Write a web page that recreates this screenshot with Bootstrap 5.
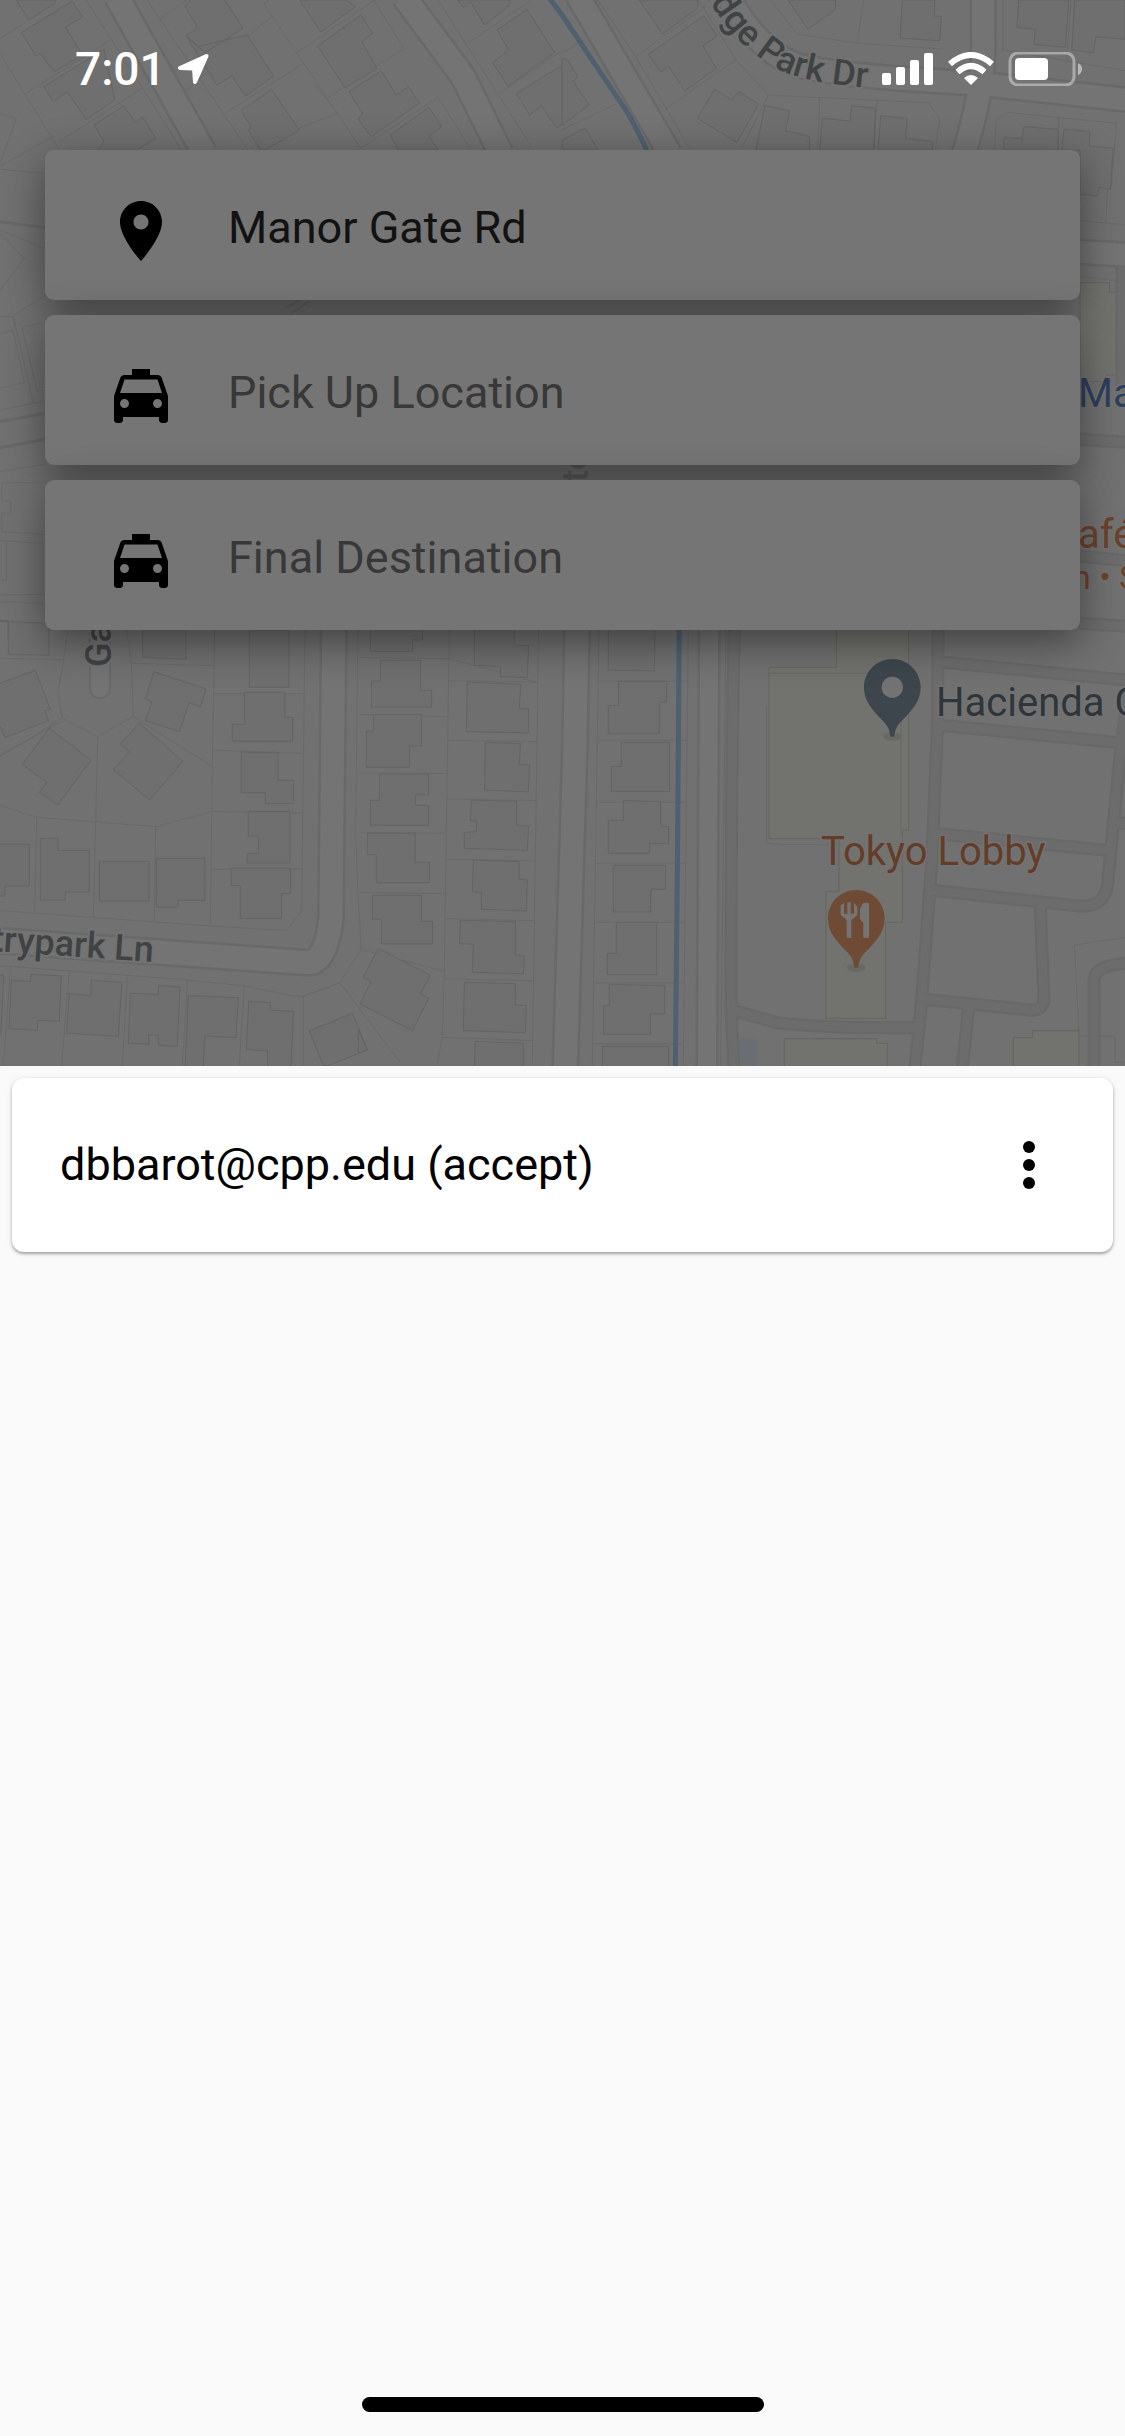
<!DOCTYPE html>
<html lang="en">
<head>
<meta charset="utf-8">
<meta name="viewport" content="width=device-width, initial-scale=1">
<title>Ride request</title>
<link href="https://cdn.jsdelivr.net/npm/bootstrap@5.3.0/dist/css/bootstrap.min.css" rel="stylesheet">
<style>
  body { background: #fafafa; color: #000; font-family: Roboto, "Liberation Sans", sans-serif; font-size: 45px; line-height: 54px; }

  /* Dimmed map area */
  .map-area { background: #717171; padding-bottom: 436px; }
  .map-canvas path, .map-canvas rect { vector-effect: non-scaling-stroke; }
  .map-canvas { font-size: 40px; }
  .parcel { fill: none; stroke: #696969; stroke-width: 1; }
  .house { fill: #6f6f6f; stroke: #646464; stroke-width: 1; }
  .shop { fill: #72726e; stroke: #666561; stroke-width: 1; }
  .street-edge { fill: none; stroke: #696969; stroke-width: 28; }
  .street { fill: none; stroke: #747474; stroke-width: 23; }
  .lane-edge { fill: none; stroke: #686868; stroke-width: 13; }
  .lane { fill: none; stroke: #6c6c6c; stroke-width: 9; }
  .creek { fill: none; stroke: #4f6070; stroke-width: 5; }
  .street-name { font-size: 36px; font-weight: 500; fill: #404344; stroke: #737373; stroke-width: 4px; paint-order: stroke; }
  .street-name.faded { fill: #5f5f5f; }
  .place-name { stroke: #737373; stroke-width: 3px; paint-order: stroke; }

  .status-bar { height: 150px; padding: 40px 43px 0 75px; color: #fff; }
  .clock { font-size: 46px; font-weight: 500; line-height: 58px; }
  .status-left { gap: 12px; }
  .status-icons { margin-top: 12px; }

  .field-list { gap: 15px; padding: 0 45px; }
  .field-card { height: 150px; padding: 6px 48px 0 60px; gap: 51px; background: #757575; border-radius: 9px; box-shadow: 0 12px 42px rgba(0, 0, 0, .44); }
  .field-card svg { margin-top: 6px; }
  .field-input { color: #121212; font-size: 45px; line-height: 54px; }
  .field-input::placeholder { color: #383838; opacity: 1; }

  .rider-sheet { padding: 12px; }
  .rider-card { height: 174px; padding: 0 48px; border-radius: 12px; box-shadow: 0 2px 3px rgba(0, 0, 0, .3), 0 1px 6px rgba(0, 0, 0, .1); }
  .home-bar { width: 402px; height: 15px; border-radius: 8px; margin-bottom: 24px; }
</style>
<script src="https://cdn.jsdelivr.net/npm/bootstrap@5.3.0/dist/js/bootstrap.bundle.min.js"></script>
</head>
<body class="d-flex flex-column min-vh-100">

<header class="map-area position-relative overflow-hidden">
  <svg class="map-canvas position-absolute top-0 start-0 w-100 h-100" viewBox="0 0 1125 1066" preserveAspectRatio="xMidYMid slice" aria-hidden="true">

    <!-- North west blocks -->
    <g transform="scale(.359 .3333)">
      <path class="parcel" d="M240 0L480 405L505 450M-5 120L60 75M0 160L165 450M75 278L310 118M0 500L150 408M165 425L395 265M410 0L690 450M445 57L520 0M520 270L755 50M620 345L845 190M735 12L1005 445M735 12L750 0M830 155L1045 0M700 440L940 340L875 250M915 292L1125 145L1040 0M1005 445L1220 292M1220 292L1310 445M1220 0L1480 440M1305 128L1480 0M1395 278L1568 150M0 508L125 520M0 340L45 357L0 490M0 690L125 745M0 870L68 775L0 700M0 950H35L45 990M35 950L125 885"/>
      <path class="house" d="M45 0L80 60L155 8V0ZM60 98L200 3L230 50L182 82L230 165L150 215L112 160L100 168ZM122 260L290 148L320 300L240 358L187 275L148 305ZM262 375L345 317L376 367L398 352L434 415L380 450H270L290 425ZM515 18L540 -10L620 -10L677 85L572 158L519 108L550 82ZM520 110L550 140L688 105L762 228L683 288L646 228L604 255ZM672 332L756 268L834 390L740 450H725L692 390L700 382ZM835 0H965L990 20L893 96ZM885 138L1005 45L1038 100L1008 125L1050 205L961 263ZM972 275L1062 213L1104 285L1138 260L1168 310L1034 410L998 358L1010 340ZM1087 405L1195 322L1230 380L1195 408L1220 450H1110ZM1275 0L1290 22L1310 5L1350 75L1420 15V0ZM1385 90L1468 28L1545 158L1415 258L1372 188L1417 150ZM1438 280L1568 195V370L1552 385L1508 318L1475 345Z"/>
      <path class="street-edge" d="M325 -10L570 460M1125 -10L1290 230L1395 460"/>
      <path class="street" d="M325 -10L570 460M1125 -10L1290 230L1395 460"/>
      <path class="parcel" d="M0 665L125 683" style="stroke-width:3"/>
      <path class="street-edge" d="M795 925L850 890M805 945L860 905" style="stroke-width:2"/>
    </g>

    <!-- North east blocks -->
    <g transform="translate(562 0) scale(.359 .3333)">
      <path class="parcel" d="M100 0L205 170L400 20M205 170L290 325L485 180M290 325L355 445M380 0L485 180L575 285L500 445M575 285L720 293L1020 308L1052 355L1040 450M580 0L655 102L825 130L1060 147M840 0L822 130M718 293L712 450M877 297L870 450M1418 0L1405 190M1228 0V150L1568 212M1205 450L1210 360L1240 337L1545 370L1530 560M1385 350L1380 450M0 160L45 130M0 390L150 312M1520 560L1515 670M1443 662L1568 675M1443 830L1550 842"/>
      <path class="house" d="M215 0L280 102L378 25V0ZM240 163L395 48L432 108L393 138L430 205L342 273L298 200L275 215ZM377 355L425 268L473 300L492 275L548 313L487 427ZM565 317L634 333L622 392L690 410V450H540ZM725 355L802 363L808 317L873 325L868 450H718ZM888 347L962 355L957 415L1032 425V450H880ZM630 0L685 88L762 28V0ZM948 0L942 115L1052 122L1057 50L1038 48V0ZM1272 0L1267 82L1318 88L1315 133L1402 142L1412 0ZM1428 0L1420 150L1480 158L1487 110L1568 118V0ZM1232 412L1282 416L1287 380L1382 388V450H1230ZM1398 388L1470 395V438L1535 445L1528 568L1497 562L1490 588L1443 583V450H1392ZM0 175L15 180L45 230L32 245L76 315L0 375ZM0 420L65 385L100 450H0Z"/>
      <path class="shop" d="M1443 848H1525V877H1550V1125L1517 1125V1145H1443Z"/>
      <path class="street-edge" d="M40 -20L300 460M440 -60Q520 130 640 190Q720 225 1150 250L1580 300M1173 -10V110Q1178 260 1120 460M1430 755L1580 765" style="stroke-width:27"/>
      <path class="street" d="M40 -20L300 460M440 -60Q520 130 640 190Q720 225 1150 250L1580 300M1173 -10V110Q1178 260 1120 460M1430 755L1580 765" style="stroke-width:22"/>
      <path class="lane-edge" d="M1443 1318L1580 1328M1443 1668L1580 1684M1443 1870L1580 1880M1560 800V1180"/>
      <path class="lane" d="M1443 1318L1580 1328M1443 1668L1580 1684M1443 1870L1580 1880M1560 800V1180"/>
      <path class="creek" d="M-45 -20L0 45L165 310Q190 345 238 455"/>
    </g>

    <!-- West edge between the fields -->
    <g transform="translate(0 300) scale(.359 .3333)">
      <path class="parcel" d="M0 100L37 92L68 248L0 265M125 270L103 272L62 82L118 68M37 47L92 308M0 330L125 303M0 515L125 493M5 548H125M5 548V602H30V640H5V695L125 703M0 722L125 730M18 730V840H0M0 885L125 883M0 905L125 910M0 963H22V1020"/>
      <path class="lane-edge" d="M0 365L125 340M0 443L125 418" style="stroke-width:3"/>
    </g>

    <!-- South west blocks -->
    <g transform="translate(0 610) scale(.3333)">
      <path class="parcel" d="M0 145L191 149L204 60M191 149L173 250L187 325L0 440M187 325L293 380L400 319L637 470M0 435L190 332M400 319L394 160L380 60M394 160L642 167M293 380L287 636L280 920M0 586L110 622L470 650L637 604L910 610M110 622L104 908M467 650L463 935M644 60L637 470L631 948M642 251H913M640 421L910 430M635 778H907M915 60L905 903L860 962L631 948L0 902M0 1067L563 1110L733 1128L880 1158L910 1160V1367M32 1067L10 1367M208 1080L185 1367M382 1098L367 1367M563 1110L547 1367M733 1128L718 1367M905 1160L1020 1118L1200 1357M910 1160L1020 1118L1084 1017L1074 850L1067 667L1074 60"/>
      <path class="house" d="M-5 33H25V133L147 136V40ZM-5 222L106 181L151 298L134 303L146 332L16 382L-10 330ZM148 355L273 451L173 585L118 547L140 518L67 463ZM418 339L549 454L449 570L340 479L388 424L361 402ZM462 185L618 237L602 291L567 278L539 365L436 332L455 275L436 266ZM428 50V142L558 148V50ZM748 60V232H867V60ZM733 247H855V322H878V394H697V343H733ZM724 427H834V511H881V581H796V548H724ZM745 604H870V759H742V730H775V678H745ZM694 775H872V851H845V925H721V827H694ZM-5 703H88V828H15V858H-5ZM121 685H174V721H268V846H196V870H121ZM298 754H447V873H298ZM469 745H615V871H534V892H469ZM-5 1096H11L3 1272H-5ZM93 1093L184 1098L178 1234L113 1231V1261L27 1256L34 1111L92 1114ZM274 1111L366 1117L355 1279L200 1270L208 1151L272 1157ZM475 1127L540 1131L532 1309L475 1306V1276L446 1274V1303L385 1300L391 1150L475 1154ZM565 1157L715 1163L708 1283L615 1278L610 1375H555ZM746 1174L811 1178V1200L881 1205L873 1375H803V1323L739 1319ZM928 1263L1058 1210L1102 1320L985 1367H970Z"/>
      <path class="street-edge" d="M1002 0L993 920Q980 1060 920 1058L-20 991"/>
      <path class="street" d="M1002 0L993 920Q980 1060 920 1058L-20 991"/>
      <path class="street-edge" d="M300 0V235" stroke-linecap="round" style="stroke-width:22"/>
      <path class="street" d="M300 0V235" stroke-linecap="round" style="stroke-width:18"/>
    </g>

    <!-- Middle blocks -->
    <g transform="translate(360 610) scale(.3333)">
      <path class="parcel" d="M0 143L268 146L535 218M268 60L253 1083L247 1282L230 1367M265 212L535 217M0 314L262 320M262 391L532 395M0 488L260 491M260 567L529 572M0 667L257 670M257 748L526 752M0 847L255 851M255 926L523 932M253 1107L520 1112M247 1282L517 1292M536 60L517 1367M0 1018L250 1083M717 60L697 1367M985 60L970 1367M715 214H985M712 391H982M710 577H979M707 760H976M704 937H973M701 1119H970M698 1301H968M1098 60L1088 900L1082 1367"/>
      <path class="house" d="M31 50V124H158V90H188V50ZM61 151H182V241H215V291H34V214H61ZM40 313H185V408H149V472H19V364H40ZM58 492H206V555H166V586H206V646H31V571H58ZM22 670H166V757H209V818H49V734H22ZM37 856H185V934H218V1002H64V928H37ZM55 1015L211 1096L181 1152L206 1165L157 1262L0 1182L34 1114L10 1102ZM-5 1260L22 1320L-5 1330ZM343 50V166L421 170V200L502 202L506 107L463 105V50ZM322 216L482 223L478 295L506 297V369L319 365ZM376 397L482 401L478 463L509 464L505 546L374 540ZM334 570L470 574V646L506 648L502 721L313 715V667L349 665V632H331ZM340 751L478 755V808L502 810L499 903L364 898V847L337 845ZM301 931L466 935V1035L493 1039L490 1092L337 1087L340 1003L299 1001ZM313 1117L466 1121V1184L499 1187L496 1268L310 1262ZM346 1294L490 1300V1375H343ZM745 50V180L883 183L886 50ZM775 214H920V276L898 278V371H745V287H775ZM784 397H929V545H754V469H784ZM790 571L902 575V648L926 650V701H869V730H745V631H790ZM760 766H917V838H872V906H760ZM769 937H890V1094H742V1030H769ZM748 1123L914 1127V1212H871V1273H731V1187H748ZM727 1309H926V1375H727Z"/>
      <path class="street-edge" d="M652 0L645 400L616 1375"/>
      <path class="street" d="M652 0L645 400L616 1375"/>
      <path class="street-edge" d="M1048 0L1041 1375" style="stroke-width:23"/>
      <path class="street" d="M1048 0L1041 1375" style="stroke-width:18"/>
      <path class="creek" d="M958 0L953 700L946 1375"/>
    </g>

    <!-- Shopping centre -->
    <g transform="translate(725 610) scale(.3333)">
      <path class="shop" d="M132 172H334V50H551V660H532V937H482V1225H303V845H342V686H132ZM178 1286H455V1300H487V1375H178ZM865 1283H923V1262H1062V1375H865Z"/>
      <path class="parcel" d="M125 290V700L172 704H342M132 190H528V676M1200 983L1048 1005L1062 1258M1062 1279H1170V1357H1200"/>
      <path d="M45 1286H97V1375H45Z" fill="#6a6d71"/>
      <path class="lane-edge" d="M30 0Q18 400 18 1190L27 1375M640 0L638 330L620 760L590 1170L570 1375M640 155L1220 212M640 345L1220 402M625 670L1155 722M1215 200L1185 440L1150 800Q1150 900 1050 887L615 840M1165 640H1220M945 880L957 1160Q957 1205 915 1200L590 1167M732 1185L712 1375M20 1200L155 1238Q300 1256 580 1253M1107 1375V1110Q1110 1062 1220 1060"/>
      <path class="lane" d="M30 0Q18 400 18 1190L27 1375M640 0L638 330L620 760L590 1170L570 1375M640 155L1220 212M640 345L1220 402M625 670L1155 722M1215 200L1185 440L1150 800Q1150 900 1050 887L615 840M1165 640H1220M945 880L957 1160Q957 1205 915 1200L590 1167M732 1185L712 1375M20 1200L155 1238Q300 1256 580 1253M1107 1375V1110Q1110 1062 1220 1060"/>
      <ellipse cx="502" cy="380" rx="28" ry="12" fill="#686864"/>
      <path d="M502 147C549 147 587 185 587 232C587 275 560 302 535 328C515 348 510 358 508 380H496C494 358 489 348 469 328C444 302 417 275 417 232C417 185 455 147 502 147Z" fill="#3c464c"/>
      <circle cx="502" cy="232" r="32" fill="#737373"/>
      <ellipse cx="394" cy="1073" rx="28" ry="12" fill="#686864"/>
      <path d="M394 840C441 840 479 878 479 925C479 968 452 995 427 1021C407 1041 402 1051 400 1073H388C386 1051 381 1041 361 1021C336 995 309 968 309 925C309 878 347 840 394 840Z" fill="#6f4a35"/>
      <path d="M347 887L357 878V911H367V877H377V911H387V878L397 890V915L379 930V983H365V930L347 915ZM432 879V983H415V938L405 927V898L414 879Z" fill="#757575"/>
    </g>

    <defs><path id="ridge-curve" d="M690 -30C722 28 745 48 764 61C790 80 830 84 867 88"/></defs>
    <text class="street-name" text-anchor="end"><textPath href="#ridge-curve" startOffset="100%">Ridge Park Dr</textPath></text>
    <text class="street-name" text-anchor="end" transform="translate(153 962) rotate(4)">Countrypark Ln</text>
    <text class="street-name" transform="translate(111 667) rotate(-90)">Gate</text>
    <text class="street-name faded" transform="translate(588 482) rotate(-90)">te</text>
    <text class="place-name" x="1078" y="407" fill="#2d3f5e">Ma</text>
    <text class="place-name" x="1052" y="548" fill="#6b412c">Café</text>
    <text class="place-name" x="1072" y="589" fill="#6b412c" font-size="34">n • S</text>
    <text class="place-name" x="936" y="716" fill="#2e363b">Hacienda C</text>
    <text class="place-name" x="821" y="865" fill="#643d29">Tokyo Lobby</text>
  </svg>

  <div class="status-bar position-relative d-flex justify-content-between align-items-start">
    <div class="status-left d-flex align-items-center">
      <time class="clock">7:01</time>
      <svg width="31" height="30" viewBox="0 0 31 30" fill="#fff" stroke="#fff" stroke-width="4" stroke-linejoin="round" role="img" aria-label="Location in use"><path d="M28.500 2L2 14L16 14.500L17 28Z"/></svg>
    </div>
    <svg width="200" height="34" viewBox="0 0 200 34" class="status-icons" fill="#fff" role="img" aria-label="Signal, Wi-Fi and battery">
      <rect x="0" y="21" width="9" height="12" rx="2"/><rect x="14" y="15" width="9" height="18" rx="2"/><rect x="28" y="8" width="9" height="25" rx="2"/><rect x="42" y="1" width="9" height="32" rx="2"/>
      <g fill="none" stroke="#fff" stroke-width="6"><path d="M68 12Q89 -6 110 12"/><path d="M75.500 20Q89 8 102.500 20"/></g>
      <path d="M89 33L82 26Q89 20 96 26Z"/>
      <rect x="128" y="1" width="64" height="32" rx="8" fill="none" stroke="#fff" stroke-opacity=".4" stroke-width="3"/>
      <rect x="133" y="6" width="33" height="22" rx="4"/>
      <path d="M196 11Q200 13 200 17T196 23Z" fill-opacity=".5"/>
    </svg>
  </div>

  <form class="field-list position-relative d-flex flex-column">
    <div class="field-card d-flex align-items-center">
      <svg width="72" height="72" viewBox="0 0 24 24" class="flex-shrink-0" aria-hidden="true"><path d="M12 2C8.130 2 5 5.130 5 9c0 5.250 7 13 7 13s7-7.750 7-13c0-3.870-3.130-7-7-7zm0 9.500c-1.380 0-2.500-1.120-2.500-2.500s1.120-2.500 2.500-2.500 2.500 1.120 2.500 2.500-1.120 2.500-2.500 2.500z"/></svg>
      <label for="current" class="visually-hidden">Current location</label>
      <input id="current" type="text" class="field-input form-control-plaintext p-0" value="Manor Gate Rd">
    </div>
    <div class="field-card d-flex align-items-center">
      <svg width="72" height="72" viewBox="0 0 24 24" class="flex-shrink-0" aria-hidden="true"><path id="taxi" d="M18.920 6.010C18.720 5.420 18.160 5 17.500 5H15V3H9v2H6.500c-.66 0-1.210.42-1.420 1.010L3 12v8c0 .55.45 1 1 1h1c.55 0 1-.45 1-1v-1h12v1c0 .55.45 1 1 1h1c.55 0 1-.45 1-1v-8l-2.080-5.990zM6.500 16c-.83 0-1.500-.67-1.500-1.500S5.670 13 6.500 13s1.500.67 1.500 1.500S7.330 16 6.500 16zm11 0c-.83 0-1.500-.67-1.500-1.500s.67-1.500 1.500-1.500 1.500.67 1.500 1.500-.67 1.500-1.500 1.500zM5 11l1.500-4.500h11L19 11H5z"/></svg>
      <label for="pickup" class="visually-hidden">Pick up location</label>
      <input id="pickup" type="text" class="field-input form-control-plaintext p-0" placeholder="Pick Up Location">
    </div>
    <div class="field-card d-flex align-items-center">
      <svg width="72" height="72" viewBox="0 0 24 24" class="flex-shrink-0" aria-hidden="true"><use href="#taxi"/></svg>
      <label for="destination" class="visually-hidden">Final destination</label>
      <input id="destination" type="text" class="field-input form-control-plaintext p-0" placeholder="Final Destination">
    </div>
  </form>
</header>

<main class="rider-sheet flex-grow-1">
  <div class="rider-card bg-white d-flex align-items-center justify-content-between">
    <span>dbbarot@cpp.edu (accept)</span>
    <button type="button" class="btn p-0 border-0 d-flex" aria-label="More options">
      <svg width="72" height="72" viewBox="0 0 24 24" fill="#000" aria-hidden="true"><circle cx="12" cy="6" r="2"/><circle cx="12" cy="12" r="2"/><circle cx="12" cy="18" r="2"/></svg>
    </button>
  </div>
</main>

<div class="home-bar bg-black mx-auto"></div>

</body>
</html>
